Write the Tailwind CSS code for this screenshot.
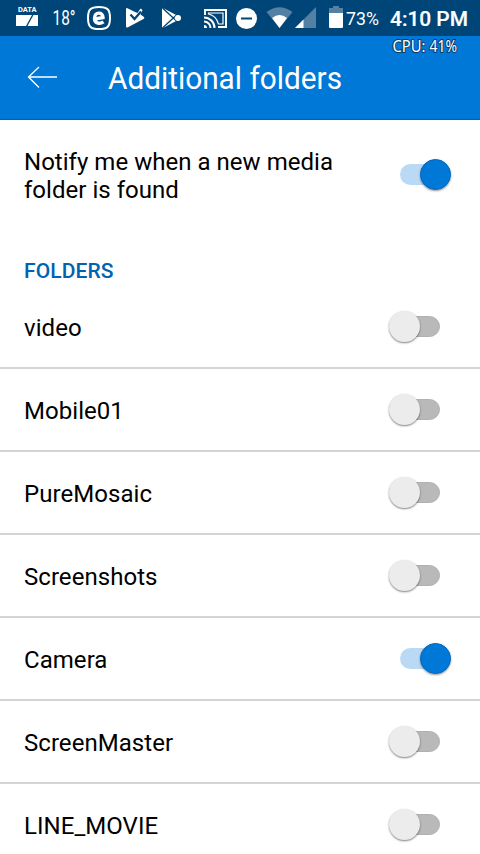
<!DOCTYPE html>
<html lang="en">
<head>
<meta charset="utf-8">
<meta name="viewport" content="width=device-width, initial-scale=1">
<title>Additional folders</title>
<script src="https://cdn.jsdelivr.net/npm/@tailwindcss/browser@4"></script>
</head>
<body class="h-[854px] w-[480px] overflow-hidden bg-white font-['Roboto',sans-serif] text-black">
<div class="flex h-[36px] items-start bg-[#004578] text-white">
  <svg class="ml-[16px] h-[36px] w-[23px] shrink-0" viewBox="0 0 23 36">
    <text x="2" y="12" font-size="7.500" font-weight="700" textLength="18.5" fill="#fff">DATA</text>
    <path d="M0 15H16L10 26H0ZM17.500 15H22V26H11.500Z" fill="#fff"/>
  </svg>
  <svg class="ml-[13px] h-[36px] w-[28px] shrink-0" viewBox="0 0 28 36">
    <text x="0.500" y="25" font-size="19.500" textLength="23" lengthAdjust="spacingAndGlyphs" fill="#fff">18°</text>
  </svg>
  <svg class="ml-[7px] h-[36px] w-[24px] shrink-0" viewBox="0 0 24 36" fill="none" stroke="#fff">
    <path d="M12 7C20.500 7 23 9.500 23 18S20.500 29 12 29S1 26.500 1 18S3.500 7 12 7Z" stroke-width="2"/>
    <path d="M8 19L16 17.500C16 11.500 7.500 11.500 7.500 18.300C7.500 24.300 13.500 24 16.500 21.800" stroke-width="3.400"/>
  </svg>
  <svg class="ml-[14px] h-[36px] w-[21px] shrink-0" viewBox="0 0 21 36">
    <path d="M2 8L9 11.500L12.500 13L15.500 8.500L17.500 10L15.500 14.500L19 17Q20 18 18.500 19L2.500 27.500Q1 28 1 26V9Q1 8 2 8Z" fill="#fff"/>
    <path d="M5.500 14.500L9.500 19L16 11.500" fill="none" stroke="#004578" stroke-width="2.200"/>
  </svg>
  <svg class="ml-[16px] h-[36px] w-[21px] shrink-0" viewBox="0 0 21 36" fill="#fff">
    <path d="M0 9Q0 8 1 8L16 16V20L1 28Q0 28 0 27Z"/>
    <path d="M.5 8L14.500 21M.5 28L14.500 15" stroke="#004578" stroke-width="1.300"/>
    <circle cx="16" cy="18" r="3"/>
  </svg>
  <svg class="ml-[21px] h-[36px] w-[24px] shrink-0" viewBox="0 0 24 36" fill="none" stroke="#fff" stroke-width="2">
    <path d="M1 15V10H22V27H14"/>
    <path d="M4.500 13H19V24H14.500Q12 15.500 4.500 14Z" fill="none" stroke-width="1.200"/>
    <path d="M0 17.500A10.500 10.500 0 0 1 10.500 28M0 21.500A6.500 6.500 0 0 1 6.500 28"/>
    <path d="M0 25A3 3 0 0 1 3 28H0Z" fill="#fff" stroke="none"/>
  </svg>
  <svg class="ml-[8px] h-[36px] w-[22px] shrink-0" viewBox="0 0 22 36">
    <circle cx="10.500" cy="18.500" r="10.500" fill="#fff"/><path d="M5 18.500H16" stroke="#004578" stroke-width="2"/>
  </svg>
  <svg class="ml-[8px] h-[36px] w-[28px] shrink-0" viewBox="0 0 28 36">
    <path d="M.5 12Q13.500 2.500 26.500 12L13.500 28Z" fill="#5480a4"/><path d="M6 18Q13.500 12 21 18L13.500 28Z" fill="#fff"/>
  </svg>
  <svg class="ml-[1px] h-[36px] w-[22px] shrink-0" viewBox="0 0 22 36">
    <path d="M21 7V28H0Z" fill="#5480a4"/><path d="M8.500 19.500V28H0Z" fill="#fff"/>
  </svg>
  <svg class="ml-[12px] h-[36px] w-[15px] shrink-0" viewBox="0 0 15 36">
    <path d="M4 6H10V8H14V13H0V8H4Z" fill="#5480a4"/><path d="M0 13H14V27Q14 28 13 28H1Q0 28 0 27Z" fill="#fff"/>
  </svg>
  <svg class="ml-[2px] h-[36px] w-[34px] shrink-0" viewBox="0 0 34 36">
    <text x="0" y="25" font-size="18.500" textLength="33" lengthAdjust="spacingAndGlyphs" fill="#fff">73%</text>
  </svg>
  <svg class="ml-[10px] h-[36px] w-[80px] shrink-0" viewBox="0 0 80 36">
    <text x="0" y="26" font-size="21" font-weight="500" textLength="78" lengthAdjust="spacingAndGlyphs" fill="#fff" stroke="#fff" stroke-width=".2">4:10 PM</text>
  </svg>
</div>
<header class="relative flex h-[84px] items-start border-b border-[#0062b1] bg-[#0078d7] text-white">
  <svg class="mt-[30px] ml-[27px] h-[24px] w-[31px]" viewBox="0 0 31 24" fill="none" stroke="#fff" stroke-width="1.300">
    <path d="M30 11H1.500M12 1L1.500 11L12 21.500"/>
  </svg>
  <svg class="mt-[24px] ml-[50px] h-[40px] w-[240px]" viewBox="0 0 240 40">
    <text x="0" y="29" font-size="30.500" textLength="234" lengthAdjust="spacingAndGlyphs" fill="#fff">Additional folders</text>
  </svg>
  <svg class="absolute top-0 left-[388px] h-[26px] w-[76px]" viewBox="0 0 76 26">
    <g font-family="Noto Sans" font-size="15.500" fill="#fff" stroke="#083b68" stroke-width="2" paint-order="stroke">
      <text x="4.500" y="16" textLength="33" lengthAdjust="spacingAndGlyphs">CPU:</text>
      <text x="41.500" y="16" textLength="27.500" lengthAdjust="spacingAndGlyphs">41%</text>
    </g>
  </svg>
</header>
<main>
  <section class="flex h-[109px] items-start justify-between pt-[28px]">
    <p class="ml-[24px] text-[24px] leading-[28px] tracking-[0.03px]">Notify me when a new media<br>folder is found</p>
    <div class="relative mt-[11px] mr-[29px] flex h-[32px] w-[51px] items-start">
      <div class="mt-[5px] h-[21px] w-[40px] rounded-full bg-[#bad9f5]"></div>
      <div class="absolute top-0 left-[20px] size-[31px] rounded-full border border-[#0069c2] bg-[#0078d7] shadow-[0_1px_2px_rgba(0,0,0,0.4)]"></div>
    </div>
  </section>
  <h2 class="ml-[24px] flex h-[57px] items-start pt-[28px] text-[21px] leading-[28px] font-medium tracking-[0.1px] text-[#0062b1]">FOLDERS</h2>
  <ul id="folders"></ul>
</main>
<template id="off">
  <div class="relative -mt-px mr-[40px] h-[32px] w-[51px]">
    <div class="mt-[5px] ml-[11px] h-[21px] w-[40px] rounded-full border border-[#b0b0b0] bg-[#b9b9b9]"></div>
    <div class="absolute top-0 left-0 size-[31px] rounded-full bg-[#ececec] shadow-[0_1px_2px_rgba(0,0,0,0.5)]"></div>
  </div>
</template>
<template id="on">
  <div class="relative -mt-px mr-[29px] h-[32px] w-[51px]">
    <div class="mt-[5px] h-[21px] w-[40px] rounded-full bg-[#bad9f5]"></div>
    <div class="absolute top-0 left-[20px] size-[31px] rounded-full border border-[#0069c2] bg-[#0078d7] shadow-[0_1px_2px_rgba(0,0,0,0.4)]"></div>
  </div>
</template>
<script>
const folders = [['video'], ['Mobile01'], ['PureMosaic'], ['Screenshots'], ['Camera', true], ['ScreenMaster'], ['LINE_MOVIE']];
const list = document.getElementById('folders');
for (const [name, enabled] of folders) {
  const row = document.createElement('li');
  row.className = 'flex h-[83px] items-start justify-between border-b-2 border-[#d4d4d4] pt-[26px]';
  const label = document.createElement('span');
  label.className = 'ml-[24px] text-[24px] leading-[32px] tracking-[0.05px]';
  label.textContent = name;
  row.append(label, document.getElementById(enabled ? 'on' : 'off').content.cloneNode(true));
  list.append(row);
}
</script>
</body>
</html>
